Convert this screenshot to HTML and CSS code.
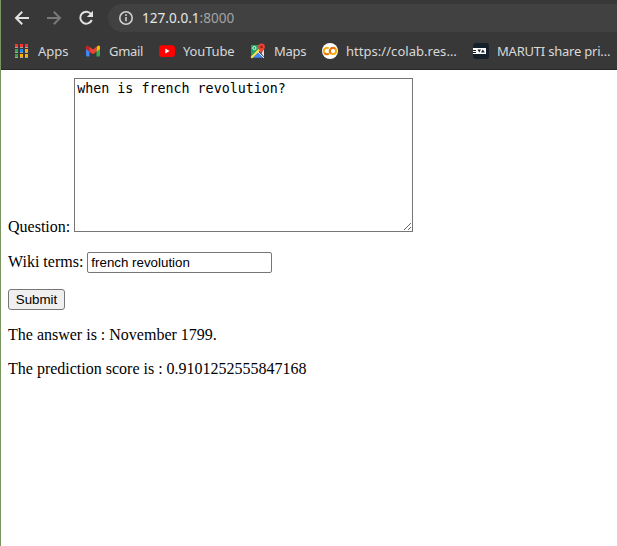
FILE: index.html
```html
<!DOCTYPE html>
<html lang="en">
<head>
<meta charset="utf-8">
<title>Question answering</title>
<link rel="stylesheet" href="styles.css">
</head>
<body>
<div class="window">
  <header class="browser">
    <div class="toolbar">
      <svg class="nav" viewBox="0 0 16 16"><path d="M15 8H2.5M8.2 1.8L2 8L8.2 14.2"/></svg>
      <svg class="nav disabled" viewBox="0 0 16 16"><path d="M1 8H13.5M7.8 1.8L14 8L7.8 14.2"/></svg>
      <svg class="nav" viewBox="0 0 16 16"><path d="M13.2 4.2A6 6 0 1 0 13.8 10"/><path class="solid" d="M15 .8V7H8.8z"/></svg>
      <div class="address">
        <svg class="info" viewBox="0 0 16 16"><circle cx="8" cy="8" r="6.2"/><path d="M8 7v4.3M8 4.3v1.6"/></svg>
        <span class="host">127.0.0.1<span class="port">:8000</span></span>
      </div>
    </div>
    <nav class="bookmarks">
      <div class="bookmark apps">
        <svg viewBox="0 0 16 16"><g fill="#a5a5a5"><path d="M1 4h3v1H1zM6 4h3v1H6zM11 4h3v1h-3zM1 9h3v1H1zM6 9h3v1H6zM11 9h3v1h-3zM1 14h3v1H1zM6 14h3v1H6zM11 14h3v1h-3z"/></g><path fill="#f7372f" d="M1 1h3v3H1zM6 1h3v3H6zM11 1h3v3h-3z"/><path fill="#2fa455" d="M1 6h3v3H1zM1 11h3v3H1z"/><path fill="#168bf7" d="M6 6h3v3H6z"/><path fill="#fbaf03" d="M11 6h3v3h-3zM6 11h3v3H6zM11 11h3v3h-3z"/></svg>
        <span>Apps</span>
      </div>
      <div class="bookmark gmail">
        <svg viewBox="0 0 16 16"><path fill="#4285f4" d="M1 4l3.5 2.6V13.5H2Q1 13.5 1 12.5z"/><path fill="#34a853" d="M15 4l-3.5 2.6v6.9H14q1 0 1-1z"/><path fill="#fbbc04" d="M11.5 4Q15 1 15 4.2V6l-3.5 2.7z"/><path fill="#c5221f" d="M1 4.2Q1 1 4.5 4v4.7L1 6z"/><path fill="#ea4335" d="M4.5 3.8L8 6.5l3.5-2.7v4.9L8 11.3 4.5 8.7z"/></svg>
        <span>Gmail</span>
      </div>
      <div class="bookmark youtube">
        <svg viewBox="0 0 16 16"><rect y="2.3" width="16" height="11.6" rx="3" fill="#f00"/><path fill="#fff" d="M6.3 5.6v5l4.3-2.5z"/></svg>
        <span>YouTube</span>
      </div>
      <div class="bookmark maps">
        <svg viewBox="0 0 16 16"><path fill="#20a464" d="M1 2h10l-4 7-6 6z"/><path fill="#4285f4" d="M8 8l6 6.8H2z"/><path fill="#e4e6e9" d="M9 7l5-2v9z"/><path stroke="#ffe047" stroke-width="2" d="M1.3 14.7L10 6"/><path stroke="#eee" d="M7.5 8.5L14 15"/><circle cx="4.4" cy="5" r="1.6" fill="none" stroke="#eee"/><path fill="#e94235" d="M11.5.5a3.4 3.4 0 0 1 3.4 3.4c0 2.3-2.8 3.8-3 7.1h-.8c-.2-3.3-3-4.8-3-7.1A3.4 3.4 0 0 1 11.5.5z"/><circle cx="11.5" cy="3.9" r="1.2" fill="#8c221b"/></svg>
        <span>Maps</span>
      </div>
      <div class="bookmark colab">
        <svg viewBox="0 0 16 16"><circle cx="8" cy="8" r="8" fill="#fff"/><g fill="none" stroke-width="1.9"><path stroke="#f9ab00" d="M6.7 5.5A3.1 3.1 0 1 0 6.7 10.6"/><circle cx="11" cy="8" r="3.1" stroke="#f9ab00"/><path stroke="#e8710a" d="M2.4 10.2A3.1 3.1 0 0 0 6.8 10.4M8.8 10.2A3.1 3.1 0 0 1 13.2 5.8"/></g></svg>
        <span>https://colab.res…</span>
      </div>
      <div class="bookmark maruti">
        <svg viewBox="0 0 16 16"><rect width="16" height="16" rx="3" fill="#15202c"/><path fill="#fff" d="M0 5h13v6H0z"/><path fill="#15202c" d="M0 7h3v1H0zM0 9h3v1H0zM4.5 6.5H8L6.3 9.5zM9.7 6.5L12 9.5H8z"/></svg>
        <span>MARUTI share pri…</span>
      </div>
    </nav>
  </header>
  <main class="page">
    <form>
      <p><label for="question">Question:</label> <textarea id="question" class="question" cols="40" rows="10" spellcheck="false">when is french revolution?</textarea></p>
      <p><label for="terms">Wiki terms:</label> <input id="terms" class="terms" type="text" value="french revolution" spellcheck="false"></p>
      <button class="submit" type="button">Submit</button>
    </form>
    <p>The answer is : November 1799.</p>
    <p>The prediction score is : 0.9101252555847168</p>
  </main>
</div>
</body>
</html>
```
FILE: styles.css
```css
* { box-sizing: border-box; }
body { margin: 0; background: #fff; overflow: hidden; }
.window { height: 546px; border-left: 1px solid #78945f; }
.browser {
  height: 70px;
  background: #383838;
  border-bottom: 1px solid #282828;
  font-family: "Noto Sans", sans-serif;
  color: #d8d8d8;
}
.toolbar { display: flex; align-items: center; height: 36px; padding-left: 13px; gap: 16px; }
.nav { width: 16px; height: 16px; flex: none; fill: none; stroke: #e2e2e2; stroke-width: 2; }
.nav .solid { fill: #e2e2e2; stroke: none; }
.disabled { stroke: #797979; }
.address {
  display: flex;
  align-items: center;
  flex: 1;
  height: 28px;
  margin: 4px 0 4px -2px;
  padding-left: 10px;
  gap: 8px;
  background: #414141;
  border-radius: 14px 0 0 14px;
}
.info { width: 16px; height: 16px; fill: none; stroke: #d0d0d0; stroke-width: 1.6; }
.host { color: #e6e6e6; font-size: 13.6px; line-height: 20px; }
.port { color: #a3a3a3; }
.bookmarks { display: flex; align-items: center; height: 30px; padding-left: 13px; }
.bookmark { display: flex; align-items: center; gap: 8px; font-size: 13px; line-height: 18px; white-space: nowrap; flex: none; }
.bookmark svg { width: 16px; height: 16px; flex: none; }
.apps { width: 71px; }
.gmail { width: 74px; letter-spacing: -.3px; }
.youtube { width: 91px; letter-spacing: -.15px; }
.maps { width: 72px; letter-spacing: -.3px; }
.colab { width: 151px; letter-spacing: .04px; }
.maruti { letter-spacing: -.22px; }
.page { padding: 8px 8px 0 7px; font: 16px "Liberation Serif", serif; color: #000; }
.page p { margin: 16px 0; }
.page form p:first-child { margin-top: 0; }
.question {
  width: 339px;
  height: 154px;
  margin: 0;
  padding: 2px;
  border: 1px solid #767676;
  font: 13.333px "DejaVu Sans Mono", monospace;
  resize: both;
}
.terms {
  width: 185px;
  height: 21px;
  padding: 1px 3px;
  border: 1px solid #767676;
  border-radius: 2px;
  font: 13.333px "Liberation Sans", sans-serif;
}
.submit {
  width: 57px;
  height: 21px;
  padding: 1px 6px;
  border: 1px solid #767676;
  border-radius: 3px;
  background: #efefef;
  color: #000;
  font: 13.333px "Liberation Sans", sans-serif;
}
```
